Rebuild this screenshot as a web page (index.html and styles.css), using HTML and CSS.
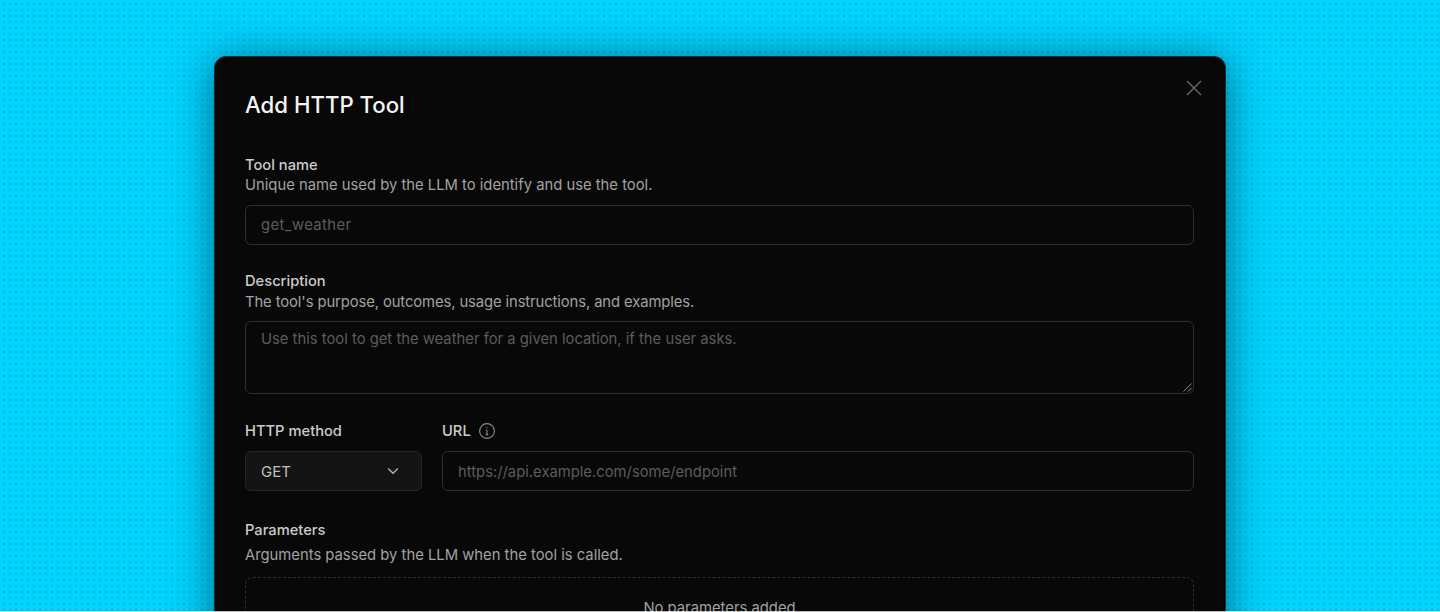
FILE: index.html
```html
<!DOCTYPE html>
<html lang="en">
<head>
<meta charset="utf-8">
<title>Add HTTP Tool</title>
<link rel="stylesheet" href="styles.css">
</head>
<body>
<main class="stage">
  <section class="dialog">
    <button class="close" aria-label="Close">
      <svg width="16" height="16" viewBox="0 0 16 16" fill="none" stroke="currentColor" stroke-width="1.2"><path d="M1 1l14 14M15 1L1 15"/></svg>
    </button>
    <h1 class="title">Add HTTP Tool</h1>
    <div class="field">
      <label class="label">Tool name</label>
      <p class="help">Unique name used by the LLM to identify and use the tool.</p>
      <div class="input wide-spaced">get_weather</div>
    </div>
    <div class="field">
      <label class="label">Description</label>
      <p class="help desc-help">The tool's purpose, outcomes, usage instructions, and examples.</p>
      <div class="input textarea">Use this tool to get the weather for a given location, if the user asks.
        <svg class="grip" width="9" height="9" viewBox="0 0 9 9" stroke="#8a8a8a" stroke-width="1" fill="none"><path d="M0.5 8.5l8-8M5 8.5l3.5-3.5"/></svg>
      </div>
    </div>
    <div class="row">
      <div class="method">
        <label class="label row-label">HTTP method</label>
        <div class="select"><span>GET</span>
          <svg width="12" height="8" viewBox="0 0 12 8" fill="none" stroke="#b4b4b4" stroke-width="1.4"><path d="M1.2 1.5L6 6.2l4.8-4.7"/></svg>
        </div>
      </div>
      <div class="url">
        <label class="label row-label">URL
          <svg width="18" height="18" viewBox="0 0 18 18" fill="none" stroke="#8c8c8c" stroke-width="1.1"><circle cx="9" cy="9" r="7.4"/><path d="M9 8.2v4.3M7.8 8.2H9M7.7 12.6h2.6"/><path d="M9 5.2v1.1" stroke-width="1.3"/></svg>
        </label>
        <div class="input">https://api.example.com/some/endpoint</div>
      </div>
    </div>
    <div class="field">
      <label class="label">Parameters</label>
      <p class="help params-help">Arguments passed by the LLM when the tool is called.</p>
      <div class="empty">No parameters added</div>
    </div>
  </section>
</main>
</body>
</html>
```
FILE: styles.css
```css
* { box-sizing: border-box; }
html, body { margin: 0; height: 612px; overflow: hidden; }
body { font-family: Inter, "Noto Sans", sans-serif; }
.stage {
  position: relative;
  height: 612px;
  overflow: hidden;
  padding-top: 56px;
  display: flex;
  justify-content: center;
  background-color: #00d4ff;
  background-image: radial-gradient(circle at 50% 50%, #00bfe6 1.2px, transparent 1.7px);
  background-size: 6px 6px;
  background-position: 1px 1px;
}
.stage::after {
  content: "";
  position: absolute;
  left: 0;
  right: 0;
  bottom: 0;
  height: 1px;
  background: rgba(255, 255, 255, 0.72);
}
.dialog {
  position: relative;
  width: 1012px;
  height: 700px;
  flex: none;
  padding: 29px 31px 0 30px;
  background: #080808;
  border: 1px solid #2a2a2a;
  border-radius: 12px;
  box-shadow: 0 4px 40px rgba(0, 30, 50, 0.58);
}
.close {
  position: absolute;
  top: 23px;
  right: 23px;
  width: 16px;
  height: 16px;
  padding: 0;
  border: 0;
  background: none;
  color: #6f6f6f;
  display: flex;
}
.title {
  margin: 0 0 31px;
  color: #f4f4f4;
  font-size: 22.2px;
  line-height: 38px;
  font-weight: 500;
}
.label {
  display: block;
  color: #cccccc;
  font-size: 14.7px;
  font-weight: 500;
  line-height: 20px;
}
.help {
  margin: 0 0 10px;
  color: #a2a2a2;
  font-size: 14.8px;
  line-height: 20px;
}
.desc-help {
  padding-top: 1px;
  margin-bottom: 9px;
  letter-spacing: -0.1px;
}
.input {
  height: 40px;
  padding: 0 15px;
  display: flex;
  align-items: center;
  color: #5c5c5c;
  font-size: 14.8px;
  border: 1px solid #2e2e2e;
  border-radius: 6px;
}
.wide-spaced { letter-spacing: 0.4px; }
.field { margin-bottom: 26px; }
.textarea {
  position: relative;
  height: 73px;
  padding-top: 8px;
  align-items: flex-start;
}
.grip { position: absolute; right: 1px; bottom: 1px; }
.row { display: flex; gap: 20px; margin-bottom: 29px; }
.method { width: 177px; flex: none; }
.url { flex: 1; }
.url .input { padding-top: 1px; }
.row-label {
  display: flex;
  align-items: center;
  gap: 7px;
  height: 20px;
  margin-top: 1px;
  margin-bottom: 10px;
}
.select {
  height: 40px;
  padding: 0 15px;
  display: flex;
  align-items: center;
  justify-content: space-between;
  color: #c0c0c0;
  font-size: 15px;
  background: #141414;
  border: 1px solid #262626;
  border-radius: 6px;
}
.select svg { margin-right: 7px; }
.params-help { margin-top: 5px; margin-bottom: 12px; }
.empty {
  height: 120px;
  padding-top: 20px;
  text-align: center;
  color: #a2a2a2;
  font-size: 14.8px;
  line-height: 20px;
  border: 1px dashed #2e2e2e;
  border-radius: 8px;
}
```
